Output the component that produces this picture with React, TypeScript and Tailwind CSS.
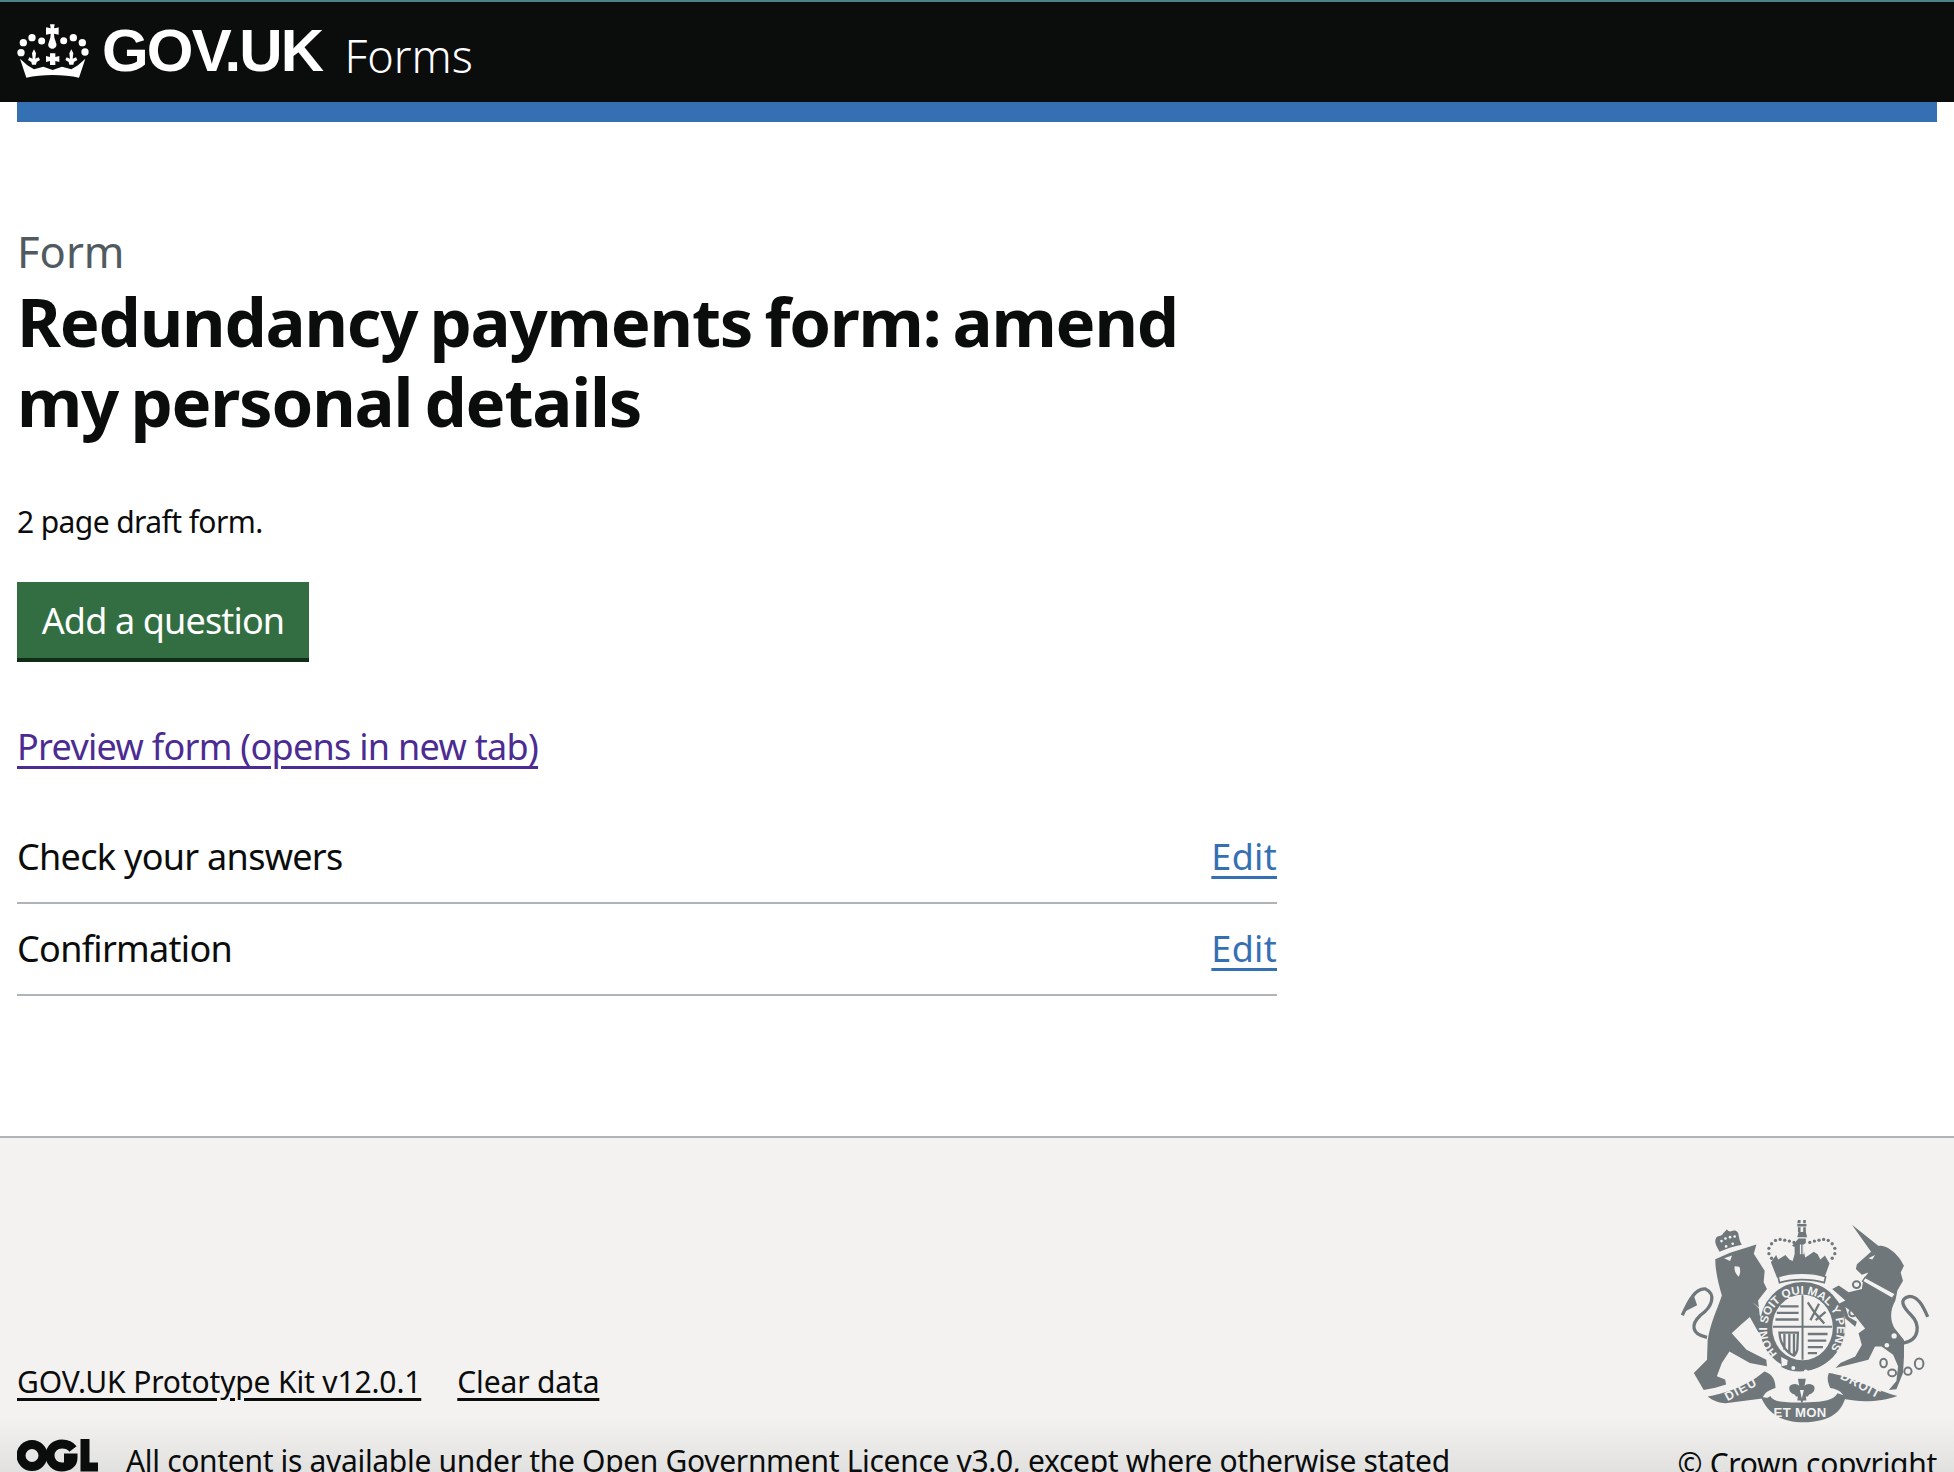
const Fleur = ({ x }: { x: number }) => (
  <path transform={`translate(${x} 0)`} d="M0 100l6 12-2 16 10-4 4 8-10 6-2 8H-6l-2-8-10-6 4-8 10 4-2-16z" />
);

const Crown = () => (
  <svg viewBox="21 24 216 162" className="w-[72px] h-[54px] shrink-0" fill="#fff">
    <path d="M120 25h14l-2 12 10-2 4-1v22l-14-3 1 12 6 18c2 8-4 15-12 15s-14-7-12-15l6-18 1-12-14 3V34l14 3z" />
    <circle cx="40" cy="80" r="11" /><circle cx="66" cy="65" r="11" /><circle cx="95" cy="75" r="10.500" /><circle cx="161" cy="74" r="10.500" /><circle cx="190" cy="65" r="11" /><circle cx="217" cy="80" r="11" /><circle cx="33" cy="110" r="11" /><circle cx="225" cy="108" r="11" />
    <Fleur x={72} />
    <Fleur x={184} />
    <path d="M120 112h16v11l12-3v18l-12-3v12h-16v-12l-12 3v-18l12 3z" />
    <path d="M30 128L52 148L72 160L100 152L128 162L156 152L184 160L204 148L226 128L207 185C185 180 155 177 128 177C101 177 71 180 49 185Z" />
  </svg>
);

const Crest = () => (
  <svg viewBox="85 50 765 625" className="w-[252px] h-[206px] block" fill="#6f777b">
    {/* lion crown */}
    <path d="M208 152c-8-14-18-30-10-42 5-7 14-5 19-10 2-6 8-8 13-16 4 6 10 8 13 6 8-4 16-3 20 3 5 8 3 24 13 38-24 4-45 11-68 21z" />
    <g fill="#f3f2f1"><circle cx="214" cy="120" r="4"/><circle cx="226" cy="112" r="4"/><circle cx="240" cy="108" r="4"/><circle cx="254" cy="106" r="4"/><circle cx="228" cy="136" r="4"/><circle cx="248" cy="128" r="4"/></g>
    {/* lion */}
    <path d="M195 175L240 155L320 130L312 158L345 210L342 245L352 265L325 300L330 345L365 395L350 415L325 395L300 350L272 375L245 400L290 450L350 480L352 500L300 490L238 455L215 490L200 530L225 540L228 555L195 565L160 572L130 520L170 480L172 420C180 370 200 330 215 285C205 250 195 210 195 175Z" />
    <path d="M170 412C120 402 122 372 150 345C185 320 200 282 165 265C135 262 115 300 95 345" fill="none" stroke="#6f777b" strokeWidth="10" />
    <path d="M100 335l30-50 10 30z" />
    <path d="M222 172l24-8-6 16zM254 196l14 2c4 8 4 20-2 30-10-10-14-20-12-32z" fill="#f3f2f1" />
    <path d="M308 305l52 45-4 4z" fill="#f3f2f1" />
    {/* crown */}
    <path d="M446 56h8v10h-10zM462 56h8v10h-8zM444 68h28v8h-28zM446 78h8v14h-8zM462 78h8v14h-8zM448 92h22l4 16h-30z" />
    <g>
      <circle cx="392" cy="115" r="5"/><circle cx="406" cy="117" r="5"/><circle cx="420" cy="120" r="5"/><circle cx="434" cy="124" r="5"/><circle cx="378" cy="118" r="5"/><circle cx="366" cy="128" r="5"/><circle cx="358" cy="142" r="5"/><circle cx="358" cy="158" r="5"/><circle cx="366" cy="172" r="5"/>
      <circle cx="482" cy="124" r="5"/><circle cx="496" cy="120" r="5"/><circle cx="510" cy="117" r="5"/><circle cx="524" cy="115" r="5"/><circle cx="538" cy="118" r="5"/><circle cx="550" cy="128" r="5"/><circle cx="558" cy="142" r="5"/><circle cx="558" cy="158" r="5"/><circle cx="550" cy="172" r="5"/>
    </g>
    <path d="M448 112h22v14l-6 4v20l4 20 12-8 14-10 12 8 8 16 14-12 14 24-16 44-5 6H392l-10-8-18-46 16-22 6 14 22-14 12 14 10 4 6-20v-22l-8-4z" />
    <path d="M452 130h4v30h-4zM460 130h4v30h-4z" fill="#f3f2f1" />
    <path d="M386 228c40-14 104-14 144 0l-4 18c-40-12-96-12-136 0z" fill="#f3f2f1" stroke="#6f777b" strokeWidth="5" />
    {/* garter */}
    <ellipse cx="460" cy="378" rx="130" ry="134" />
    <path id="gart" d="M384 462A106 106 0 1 1 540 454" fill="none" />
    <text fontFamily="'Liberation Sans', sans-serif" fontWeight="700" fontSize="35" fill="#f3f2f1">
      <textPath href="#gart" startOffset="0" textLength="505" lengthAdjust="spacingAndGlyphs">HONI SOIT QUI MAL Y PENSE</textPath>
    </text>
    {/* shield */}
    <ellipse cx="460" cy="382" rx="92" ry="100" fill="#f3f2f1" />
    <path d="M460 284v196M370 380h180" stroke="#6f777b" strokeWidth="6" fill="none" />
    <g fill="none" stroke="#6f777b" strokeWidth="7">
      <path d="M392 318h56M382 338h66M378 358h70M476 306l20 30 30 34M510 310l-26 50M530 335l-30 25M476 402h60M476 422h56M476 442h46M476 460h28" />
      <path d="M390 398h56l-2 52c-2 8-4 14-10 18-24-10-42-36-44-70zM405 402v48M420 402v58M434 402v62" />
    </g>
    {/* scroll beneath shield */}
    <path d="M395 480c40 18 96 18 135-8l6 12c-34 34-100 42-140 18z" />
    <path d="M395 472l20 10-2 14-16 4z" fill="#f3f2f1" />
    <g fill="#f3f2f1"><circle cx="432" cy="505" r="6"/><circle cx="470" cy="516" r="6"/></g>
    {/* unicorn */}
    <path d="M610 70L690 134C720 130 755 165 768 195L758 215L765 240L748 270L742 300C725 330 725 360 740 385L768 420L768 470L765 520L745 570L722 572L745 545L750 500L735 465L700 440L680 440L660 480L600 495L560 505L575 490L620 470L640 435L630 400L650 385L630 360L610 335L590 320L600 350L625 365L620 380L590 355L570 310L590 300L550 265L570 255L600 275L640 265L645 235L660 215L640 222L622 205L625 190L668 152Z" />
    <path d="M765 430C820 420 815 370 790 345C765 320 750 295 785 288C810 288 825 315 840 350" fill="none" stroke="#6f777b" strokeWidth="10" />
    <path d="M650 230l92 50-10 14-90-52z" fill="#f3f2f1" stroke="#6f777b" strokeWidth="4" />
    <path d="M660 172l20-10-8 14z" fill="#f3f2f1" />
    <g fill="#f3f2f1"><circle cx="738" cy="408" r="8"/><circle cx="716" cy="436" r="7"/><circle cx="742" cy="365" r="8"/></g>
    <g fill="none" stroke="#6f777b" strokeWidth="6">
      <ellipse cx="706" cy="490" rx="10" ry="13" /><ellipse cx="732" cy="520" rx="12" ry="10" /><ellipse cx="780" cy="515" rx="11" ry="11" /><ellipse cx="814" cy="492" rx="13" ry="16" /><ellipse cx="624" cy="252" rx="11" ry="10" /><ellipse cx="612" cy="338" rx="10" ry="10" />
    </g>
    {/* fleur-de-lis */}
    <path d="M446 538h24l-4 22c4-8 24-10 30 2 2 12-4 20-16 24l-4 6h-6l2 12h-10l-4 10-4-10h-10l2-12h-6l-4-6c-12-4-18-12-16-24 6-12 26-10 30-2z" />
    <path d="M452 572h12l-6 26z" fill="#f3f2f1" />
    {/* mottos */}
    <path d="M172 592c40-8 110-24 172-76 28 8 34 32 34 50-20 6-34 14-40 32l-112 14c-16 0-38-6-54-20z" />
    <path d="M332 590c10 6 24 8 30 0 10 18 38 20 98 20 50-2 84-2 102-22l4-6 26 8c-14 50-46 78-130 80-70-2-106-26-130-80z" />
    <path d="M540 520c60 8 120 44 208 70-38 14-92 20-130 14l-28-4c-6-18-20-30-46-34-8-20-10-32-4-46z" />
    <g fill="#f3f2f1" fontFamily="'Liberation Sans', sans-serif" fontWeight="700">
      <text x="232" y="606" fontSize="38" transform="rotate(-28 232 606)" letterSpacing="4">DIEU</text>
      <text x="572" y="536" fontSize="38" transform="rotate(28 572 536)" letterSpacing="3">DROIT</text>
      <text x="372" y="654" fontSize="40" letterSpacing="1">ET MON</text>
    </g>
  </svg>
);

const Ogl = () => (
  <svg viewBox="0 0 81 33" className="w-[81px] h-[33px] shrink-0 mt-[1px]" fill="none" stroke="#0b0c0c" strokeWidth="9">
    <circle cx="15" cy="16.500" r="11" />
    <path d="M56 10c-3-4-7-5-11-5-7 0-12 5-12 11.500S38 28 45 28c6 0 11-3 11-9h-9" />
    <path d="M68 0v28h13" />
  </svg>
);

export default function App() {
  return (
    <div className="h-[1472px] overflow-hidden bg-white font-['Noto_Sans','Liberation_Sans',sans-serif] text-[#0b0c0c] flex flex-col">
      <header className="h-[102px] shrink-0 bg-[#0b0c0c] border-t-2 border-[#4f8189] flex items-center pl-[17px] pb-[2px] gap-[13px]">
        <Crown />
        <span className="font-['Liberation_Sans',sans-serif] font-bold text-[60px] leading-none text-white tracking-[-1.8px]">GOV.UK</span>
        <span className="text-[45px] leading-none text-white ml-[9px] mt-[8px] font-light">Forms</span>
      </header>
      <main className="px-[17px] shrink-0">
        <div className="h-[20px] bg-[#3570b3]" />
        <div className="pt-[104px] w-[1260px]">
          <p className="text-[43.500px] leading-[50px] text-[#505a5f]">Form</p>
          <h1 className="mt-[5px] text-[67px] leading-[80px] font-bold tracking-[-1.2px] [word-spacing:-4px] w-[1200px]">Redundancy payments form: amend my personal details</h1>
          <p className="mt-[61px] text-[30px] leading-[40px] tracking-[-0.6px]">2 page draft form.</p>
          <button className="block mt-[40px] h-[80px] w-[292px] bg-[#326e42] border-b-[4px] border-[#0f2d17] text-[36px] tracking-[-0.85px] text-white text-center leading-[78px]">Add a question</button>
          <a className="block mt-[61px] text-[36px] leading-[48px] tracking-[-0.7px] text-[#4c2c92] underline underline-offset-[6px] w-fit">Preview form (opens in new tab)</a>
          <div className="mt-[41px]">
            <div className="h-[92px] flex items-center justify-between border-b-2 border-[#b1b4b6] text-[36px] tracking-[-0.7px]">
              <span>Check your answers</span>
              <a className="text-[#3570b3] underline underline-offset-[6px] tracking-[0.3px]">Edit</a>
            </div>
            <div className="h-[92px] flex items-center justify-between border-b-2 border-[#b1b4b6] text-[36px] tracking-[-0.7px]">
              <span>Confirmation</span>
              <a className="text-[#3570b3] underline underline-offset-[6px] tracking-[0.3px]">Edit</a>
            </div>
          </div>
        </div>
      </main>
      <footer className="mt-[140px] flex-1 border-t-2 border-[#b1b4b6] px-[17px] flex justify-between bg-[linear-gradient(#f3f2f1_80%,#dcdcdb_100%)]">
        <div className="pt-[224px]">
          <div className="flex gap-[36px] text-[30px] leading-[40px] tracking-[-0.15px]">
            <a className="underline underline-offset-[5px]">GOV.UK Prototype Kit v12.0.1</a>
            <a className="underline underline-offset-[5px]">Clear data</a>
          </div>
          <div className="flex items-start mt-[36px] gap-[28px]">
            <Ogl />
            <span className="text-[30px] leading-[46px] tracking-[-0.32px] whitespace-nowrap">All content is available under the Open Government Licence v3.0, except where otherwise stated</span>
          </div>
        </div>
        <div className="flex flex-col items-end pt-[80px]">
          <div className="mr-[6px]"><Crest /></div>
          <span className="mt-[17px] text-[30px] leading-[46px] tracking-[-0.3px]">© Crown copyright</span>
        </div>
      </footer>
    </div>
  );
}
